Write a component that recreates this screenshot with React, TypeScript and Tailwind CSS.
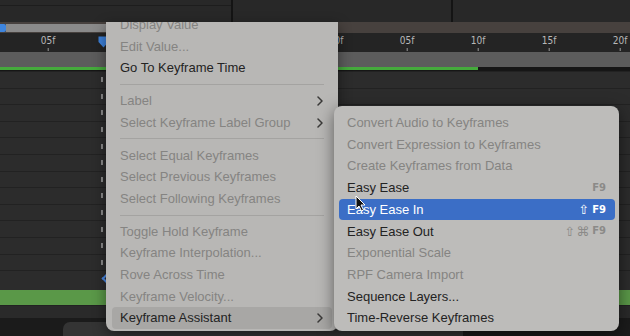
import React from "react";

type Item =
  | { kind: "sep" }
  | {
      kind: "item";
      label: string;
      disabled?: boolean;
      sub?: boolean;
      hover?: boolean;
      active?: boolean;
      mods?: string;
      keys?: string;
    };

const mainItems: Item[] = [
  { kind: "item", label: "Display Value", disabled: true },
  { kind: "item", label: "Edit Value...", disabled: true },
  { kind: "item", label: "Go To Keyframe Time" },
  { kind: "sep" },
  { kind: "item", label: "Label", disabled: true, sub: true },
  { kind: "item", label: "Select Keyframe Label Group", disabled: true, sub: true },
  { kind: "sep" },
  { kind: "item", label: "Select Equal Keyframes", disabled: true },
  { kind: "item", label: "Select Previous Keyframes", disabled: true },
  { kind: "item", label: "Select Following Keyframes", disabled: true },
  { kind: "sep" },
  { kind: "item", label: "Toggle Hold Keyframe", disabled: true },
  { kind: "item", label: "Keyframe Interpolation...", disabled: true },
  { kind: "item", label: "Rove Across Time", disabled: true },
  { kind: "item", label: "Keyframe Velocity...", disabled: true },
  { kind: "item", label: "Keyframe Assistant", sub: true, hover: true },
];

const subItems: Item[] = [
  { kind: "item", label: "Convert Audio to Keyframes", disabled: true },
  { kind: "item", label: "Convert Expression to Keyframes", disabled: true },
  { kind: "item", label: "Create Keyframes from Data", disabled: true },
  { kind: "item", label: "Easy Ease", keys: "F9" },
  { kind: "item", label: "Easy Ease In", mods: "⇧", keys: "F9", active: true },
  { kind: "item", label: "Easy Ease Out", mods: "⇧⌘", keys: "F9" },
  { kind: "item", label: "Exponential Scale", disabled: true },
  { kind: "item", label: "RPF Camera Import", disabled: true },
  { kind: "item", label: "Sequence Layers..." },
  { kind: "item", label: "Time-Reverse Keyframes" },
];

const ticks = [
  { label: "05f", x: 48 },
  { label: "00f", x: 336 },
  { label: "05f", x: 407 },
  { label: "10f", x: 478 },
  { label: "15f", x: 549 },
  { label: "20f", x: 620 },
];

function Chevron() {
  return (
    <svg width="6" height="10" viewBox="0 0 6 10" className="shrink-0">
      <polyline
        points="1,1 5,5 1,9"
        fill="none"
        stroke="#3a3938"
        strokeWidth="1.5"
        strokeLinecap="round"
        strokeLinejoin="round"
      />
    </svg>
  );
}

function MenuRow({ item }: { item: Item }) {
  if (item.kind === "sep") {
    return (
      <div className="h-[11px] flex items-center px-[8px]">
        <div className="h-px w-full bg-[#a4a3a1]" />
      </div>
    );
  }
  const color = item.active
    ? "text-white"
    : item.disabled
    ? "text-[#858482]"
    : "text-[#232323]";
  const bg = item.active
    ? "bg-[#3b6ec6]"
    : item.hover
    ? "bg-[#a8a7a5]"
    : "";
  const keyColor = item.active ? "text-white" : "text-[#8b8a88]";
  return (
    <div
      className={`h-[21.7px] shrink-0 flex items-center justify-between pl-[8px] pr-[9px] rounded-[4px] text-[13px] ${color} ${bg}`}
    >
      <span className="whitespace-nowrap">{item.label}</span>
      {item.sub && <Chevron />}
      {item.keys && (
        <span className={`flex items-center gap-[2px] font-['DejaVu_Sans',sans-serif] ${keyColor}`}>
          {item.mods && (
            <span className="text-[13px] leading-none tracking-[1px]">{item.mods}</span>
          )}
          <span className="text-[10px] font-bold leading-none">{item.keys}</span>
        </span>
      )}
    </div>
  );
}

function Row({ mark }: { mark?: "blue" | "tick" }) {
  return (
    <div className="h-[16.6px] shrink-0 flex items-center bg-[#2c2c2c] border-t border-[#222222]">
      <div className="w-[101px] shrink-0" />
      {mark === "blue" ? (
        <div className="w-[7px] h-[7px] border-l-2 border-b-2 border-[#4a8ae6] rotate-45 translate-x-[2px]" />
      ) : (
        <div className="w-[2px] h-[5px] bg-[#8a8a8a]" />
      )}
    </div>
  );
}

export default function App() {
  return (
    <div className="relative w-[630px] h-[336px] overflow-hidden bg-[#1c1c1c] font-['Liberation_Sans',Arial,sans-serif]">
      {/* top panels */}
      <div className="flex h-[22px] bg-[#282828]">
        <div className="w-[231px] flex flex-col">
          <div className="h-[6px] border-b border-[#1d1d1d]" />
        </div>
        <div className="w-[2px] bg-[#141414]" />
        <div className="w-[218px]" />
        <div className="w-[2px] bg-[#141414]" />
        <div className="flex-1" />
      </div>

      {/* work area bar */}
      <div className="flex h-[11px] items-center bg-[#47413e]">
        <div className="w-[6px] h-[8px] bg-[#3e85de] rounded-r-[2px]" />
        <div className="w-[220px] h-[8px] bg-[#8a8a8a]" />
      </div>

      {/* ruler */}
      <div className="relative h-[19px] bg-[#242424]">
        {ticks.map((t, i) => (
          <div
            key={i}
            className="absolute top-[2px] flex flex-col items-center -translate-x-1/2"
            style={{ left: t.x }}
          >
            <span className="text-[10px] leading-[12px] text-[#b8b8b8] font-['DejaVu_Sans_Condensed','DejaVu_Sans',sans-serif]">
              {t.label}
            </span>
            <div className="mt-[1px] w-px h-[3px] bg-[#9a9a9a]" />
          </div>
        ))}
        <svg
          className="absolute left-[98px] top-[3px]"
          width="11"
          height="12"
          viewBox="0 0 11 12"
        >
          <path d="M0.5 0.5 H10.5 V6 L5.5 11.5 L0.5 6 Z" fill="#3d82dc" />
        </svg>
      </div>

      {/* layer bar */}
      <div className="h-[15px] bg-[#5c5c5c]" />
      <div className="flex h-[4px] bg-[#161616]">
        <div className="w-[478px] h-[3px] bg-[#45aa3c]" />
      </div>

      {/* property rows */}
      <div className="flex flex-col">
        {Array.from({ length: 13 }).map((_, i) => (
          <Row key={i} mark={i === 12 ? "blue" : "tick"} />
        ))}
        <div className="h-[3px] bg-[#2c2c2c]" />
        <div className="h-[15px] bg-[#5a9848]" />
        <div className="h-[13px] bg-[#2a2a2a] border-t border-[#222222]" />
        <div className="flex h-[18px] items-end bg-[#1b1b1b] pl-[63px]">
          <div className="w-[400px] h-[14px] rounded-t-[7px] bg-[#343434]" />
        </div>
      </div>

      {/* main context menu */}
      <div className="absolute left-[106px] top-[22px] w-[232px] h-[309px] overflow-hidden rounded-b-[8px] bg-[#b8b7b5] shadow-[0_4px_14px_rgba(0,0,0,0.45)]">
        <div className="mt-[-8px] flex flex-col px-[6px]">
          {mainItems.map((it, i) => (
            <MenuRow key={i} item={it} />
          ))}
        </div>
      </div>

      {/* submenu */}
      <div className="absolute left-[334px] top-[106px] w-[285px] h-[225px] rounded-[8px] bg-[#bdbcba] shadow-[0_4px_16px_rgba(0,0,0,0.5)] pt-[6px] pl-[5px] pr-[4px] flex flex-col">
        {subItems.map((it, i) => (
          <MenuRow key={i} item={it} />
        ))}
      </div>

      {/* mouse cursor */}
      <svg
        className="absolute left-[355px] top-[195px]"
        width="11"
        height="17"
        viewBox="0 0 11 17"
      >
        <path
          d="M1 1 L1 14 L4 11 L6.5 16 L8.5 15 L6 10 L10 10 Z"
          fill="#111111"
          stroke="#ffffff"
          strokeWidth="1"
          strokeLinejoin="round"
        />
      </svg>
    </div>
  );
}
